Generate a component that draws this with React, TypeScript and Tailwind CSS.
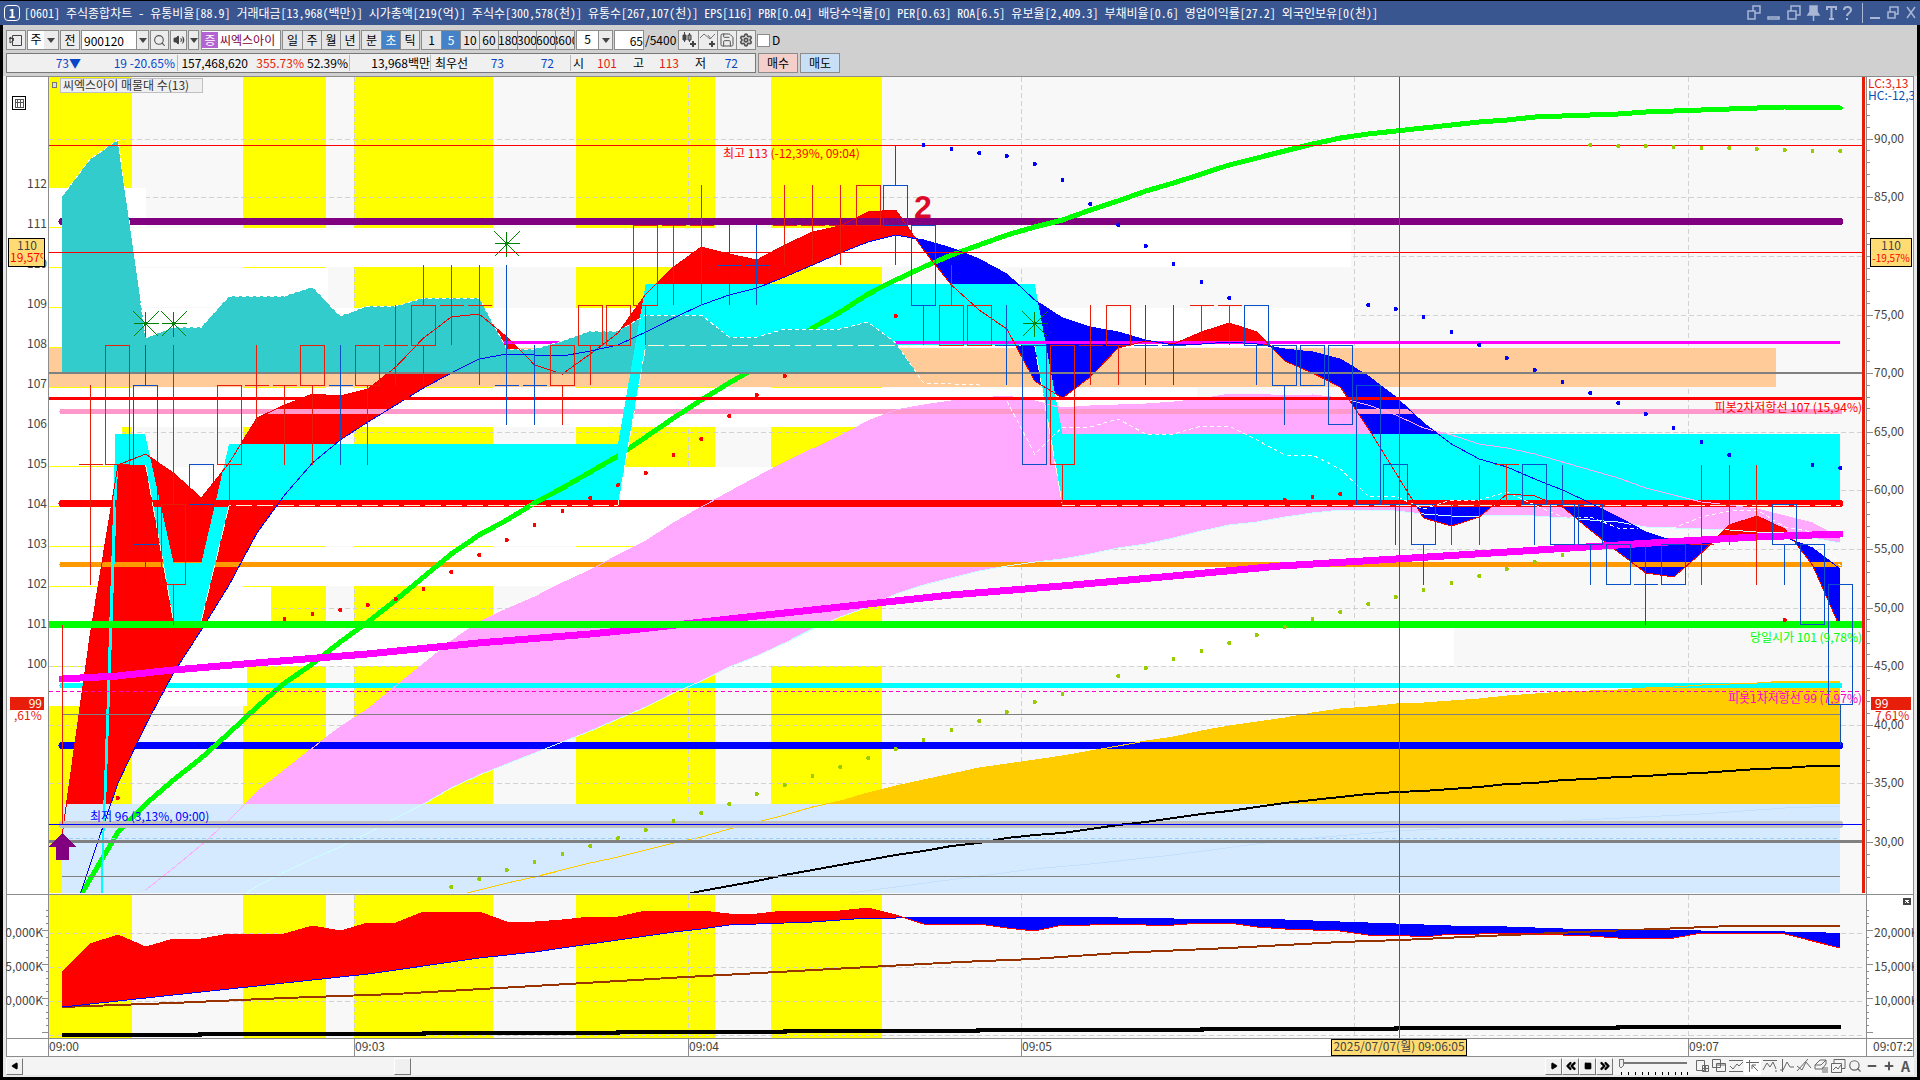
import React from 'react';
import { ChevronsLeft, ChevronsRight, Save, Search, Settings, Volume2, Minus, Plus, Play, Square } from 'lucide-react';

const STEP = 27.78;
const px = (i: number) => 62.4 + STEP * i;
const py = (price: number) => 145.3 + (113 - price) * 39.95;

// [top, bottom, high, low, up?] for each 5 second bar
type Bar = [number, number, number, number, number];

const bars: Bar[] = [
  [101, 96, 101, 96, 2], [105, 105, 107, 102, 1], [108, 105, 108, 105, 1], [107, 103, 108, 102, 0], [104, 102, 108, 101, 1],
  [105, 104, 105, 103, 0], [107, 105, 107, 104, 1], [107, 107, 108, 106, 1], [107, 107, 107, 105, 1], [108, 107, 108, 105, 1],
  [107, 107, 108, 105, 0], [108, 107, 108, 105, 1], [108, 108, 109, 107, 1], [109, 108, 110, 107, 1], [109, 109, 110, 108, 1],
  [109, 109, 110, 107, 1], [107, 107, 110, 106, 0], [107, 107, 108, 106, 0], [108, 107, 108, 106, 1], [109, 108, 109, 107, 1],
  [109, 108, 109, 108, 1], [111, 109, 111, 108, 1], [111, 111, 111, 109, 1], [111, 111, 112, 109, 1], [110, 110, 111, 109, 0],
  [110, 110, 111, 109, 0], [111, 111, 112, 110, 1], [111, 111, 112, 110, 1], [111, 111, 112, 110, 1], [112, 111, 112, 111, 1],
  [112, 111, 113, 110, 0], [111, 109, 111, 108, 0], [109, 108, 110, 108, 1], [109, 108, 109, 108, 1], [108, 108, 109, 107, 0],
  [108, 105, 108, 105, 0], [108, 105, 108, 104, 1], [108, 108, 109, 107, 1], [109, 108, 109, 107, 1], [108, 108, 109, 107, 0],
  [108, 108, 109, 107, 0], [109, 109, 109, 108, 1], [109, 109, 109, 108, 1], [109, 108, 109, 107, 0], [108, 107, 108, 106, 0],
  [108, 107, 108, 107, 0], [108, 106, 108, 106, 0], [107, 104, 107, 104, 0], [105, 104, 105, 103, 0], [104, 103, 104, 102, 0],
  [104, 104, 104, 103, 1], [104, 104, 105, 103, 1], [105, 105, 105, 104, 1], [105, 104, 105, 103, 0], [104, 103, 105, 103, 0],
  [104, 103, 104, 102, 0], [103, 102, 103, 102, 0], [102, 102, 103, 101, 0], [103, 102, 103, 102, 0], [103, 103, 105, 102, 1],
  [104, 104, 105, 103, 1], [104, 104, 105, 102, 1], [104, 103, 104, 102, 0], [103, 101, 103, 101, 0], [102, 99, 102, 98, 0],
];

const fast = [
  833, 635, 465, 454, 473, 498, 463, 418, 405, 394, 396, 389, 367, 338, 317, 314, 337, 365, 374, 354, 333, 294, 267, 247, 254,
  260, 245, 232, 226, 212, 210, 250, 285, 310, 329, 381, 398, 377, 348, 341, 344, 332, 323, 332, 361, 373, 387, 428, 473, 518,
  526, 517, 494, 496, 507, 530, 552, 573, 577, 553, 525, 516, 529, 565, 628,
];
const slow = [
  950, 864, 783, 725, 673, 630, 585, 533, 495, 463, 440, 422, 405, 388, 373, 359, 354, 355, 356, 351, 345, 332, 318, 305, 295,
  288, 277, 265, 253, 242, 235, 240, 248, 259, 274, 300, 318, 327, 332, 340, 345, 344, 342, 344, 349, 352, 359, 376, 397, 423,
  444, 459, 467, 479, 490, 503, 517, 532, 541, 542, 537, 535, 537, 548, 569,
];
const teal = [
  196, 159, 140, 338, 327, 327, 296, 296, 296, 287, 316, 306, 306, 298, 298, 298, 349, 349, 341, 331, 331, 315, 315, 315, 337,
  337, 329, 329, 329, 322, 343, 383, 384, 385, 401, 454, 427, 427, 419, 434, 434, 426, 426, 440, 455, 455, 469, 496, 496, 509,
  500, 500, 492, 505, 517, 517, 528, 528, 528, 517, 511, 510, 527, 532, 566,
];
// starts at bar 3
const pinkTop = [
  890, 868, 845, 820, 792, 770, 748, 727, 709, 686, 664, 641, 622, 609, 597, 583, 570, 555, 541, 523, 507, 492, 477, 462, 449,
  436, 421, 410, 405, 401, 398, 396, 401, 408, 406, 405, 404, 402, 399, 394, 394, 396, 395, 398, 405, 415, 428, 435, 444, 448,
  454, 462, 470, 478, 488, 495, 502, 505, 509, 516, 523, 538,
];
const pinkLow = [
  1000, 975, 945, 905, 886, 872, 859, 847, 833, 818, 804, 788, 775, 764, 753, 742, 731, 719, 707, 693, 681, 667, 656, 643, 629,
  617, 607, 594, 585, 578, 571, 566, 562, 559, 554, 548, 544, 538, 531, 525, 522, 517, 513, 510, 510, 511, 514, 516, 516, 515,
  516, 518, 520, 522, 527, 528, 529, 530, 532, 533, 538, 543,
];
// starts at bar 14
const gold = [
  897, 890, 883, 877, 870, 863, 857, 850, 843, 837, 829, 822, 815, 807, 801, 793, 786, 780, 774, 768, 764, 760, 756, 751, 746,
  741, 737, 731, 726, 722, 718, 713, 709, 707, 704, 703, 701, 699, 696, 694, 692, 691, 690, 688, 687, 685, 684, 683, 681, 681, 682,
];
// starts at bar 22
const black = [
  897, 891, 886, 881, 875, 870, 865, 860, 855, 851, 846, 843, 838, 835, 833, 829, 825, 822, 818, 814, 811, 807, 803, 800, 797,
  794, 792, 791, 789, 787, 784, 783, 780, 779, 777, 776, 774, 773, 771, 769, 768, 766, 766,
];
// starts at bar 2
const green = [
  832, 804, 780, 758, 733, 707, 683, 664, 642, 622, 600, 577, 554, 535, 520, 503, 488, 472, 456, 437, 418, 400, 383, 367, 347,
  328, 312, 294, 280, 267, 255, 245, 235, 227, 220, 210, 201, 191, 183, 174, 165, 158, 151, 144, 138, 134, 131, 128, 125, 122,
  120, 117, 116, 115, 114, 112, 111, 110, 109, 108, 107, 107, 108,
];

const redDots = [
  [2, 798], [8, 619], [9, 614], [10, 610], [11, 605], [12, 599], [13, 589], [14, 572], [15, 555], [16, 540], [17, 525], [18, 511],
  [19, 498], [20, 485], [21, 473], [22, 455], [23, 439], [24, 416], [25, 395], [26, 376], [30, 316], [44, 500], [45, 497],
  [46, 494], [62, 620],
];
const blueDots = [
  [31, 145], [32, 149], [33, 153], [34, 156], [35, 164], [36, 180], [37, 204], [38, 225], [39, 246], [40, 264], [41, 282],
  [42, 298], [47, 305], [48, 309], [49, 317], [50, 332], [51, 345], [52, 358], [53, 370], [54, 382], [55, 393], [56, 403],
  [57, 414], [58, 428], [59, 442], [60, 455], [63, 465], [64, 468],
];
const oliveDots = [
  [14, 887], [15, 879], [16, 870], [17, 862], [18, 854], [19, 846], [20, 838], [21, 830], [22, 821], [23, 813], [24, 804],
  [25, 794], [26, 785], [27, 776], [28, 767], [29, 758], [30, 749], [31, 740], [32, 730], [33, 721], [34, 712], [35, 702],
  [36, 694], [38, 676], [39, 668], [40, 659], [41, 651], [42, 643], [43, 635], [44, 627], [45, 619], [46, 612], [47, 604],
  [48, 597], [49, 590], [50, 583], [51, 576], [52, 569], [53, 562], [54, 555], [55, 145], [56, 146], [57, 146], [58, 147],
  [59, 148], [60, 148], [61, 149], [62, 150], [63, 151], [64, 151],
];

const volFast = [
  972, 944, 935, 947, 939, 939, 934, 934, 934, 926, 931, 923, 923, 912, 912, 912, 922, 922, 920, 917, 917, 911, 911, 911, 914,
  914, 911, 911, 911, 908, 915, 924, 924, 924, 928, 931, 925, 925, 924, 925, 925, 923, 923, 927, 929, 930, 931, 935, 935, 937,
  934, 934, 933, 934, 935, 936, 938, 938, 938, 933, 933, 933, 934, 941, 948,
];
const volSlow = [
  1007, 1004, 1001, 998, 995, 992, 989, 986, 983, 980, 977, 974, 970, 966, 962, 958, 955, 952, 948, 944, 940, 936, 932, 929, 925,
  924, 923, 922, 920, 918, 918, 917, 917, 917, 917, 917, 917, 917, 918, 918, 919, 919, 919, 919, 920, 921, 922, 923, 924, 925,
  926, 926, 927, 928, 929, 929, 930, 930, 930, 931, 931, 931, 932, 932, 934,
];

const stripes = [[49, 83], [243, 83], [354, 139], [576, 139], [771, 111]];
const gridX = [354, 688, 1021, 1354, 1688];

const pts = (ys: number[], from = 0) => ys.map((y, i) => `${px(i + from).toFixed(1)},${y}`).join(' ');
const rev = (ys: number[], from = 0) => pts(ys, from).split(' ').reverse().join(' ');

// Splits the ribbon between two averages where they cross
function ribbon(a: number[], b: number[]) {
  let up = '';
  let down = '';
  for (let i = 0; i < a.length - 1; i++) {
    const d0 = b[i] - a[i];
    const d1 = b[i + 1] - a[i + 1];
    const x0 = px(i);
    const x1 = px(i + 1);
    if (d0 * d1 < 0) {
      const t = d0 / (d0 - d1);
      const xc = x0 + (x1 - x0) * t;
      const yc = a[i] + (a[i + 1] - a[i]) * t;
      const first = `M${x0} ${a[i]}L${xc} ${yc}L${x0} ${b[i]}Z`;
      const second = `M${xc} ${yc}L${x1} ${a[i + 1]}L${x1} ${b[i + 1]}Z`;
      if (d0 > 0) { up += first; down += second; } else { down += first; up += second; }
    } else {
      const quad = `M${x0} ${a[i]}L${x1} ${a[i + 1]}L${x1} ${b[i + 1]}L${x0} ${b[i]}Z`;
      if (d0 + d1 > 0) up += quad; else down += quad;
    }
  }
  return { up, down };
}

const price = ribbon(fast, slow);
const volume = ribbon(volFast, volSlow);

function Level({ y, color, w = 1, full = false, dash }: { y: number; color: string; w?: number; full?: boolean; dash?: string }) {
  return (
    <line x1={full ? 49 : 62} x2={full ? 1863 : 1840} y1={y} y2={y} stroke={color} strokeWidth={w}
      strokeLinecap={w > 3 && !full ? 'round' : 'butt'} strokeDasharray={dash} />
  );
}

function Dots({ data, color }: { data: number[][]; color: string }) {
  return <g fill={color}>{data.map(([i, y]) => <circle key={`${i}-${y}`} cx={px(i)} cy={y} r="2" />)}</g>;
}

function Candles() {
  return (
    <g fill="none">
      {bars.map(([top, bottom, high, low, up], i) => {
        const x = Math.floor(px(i)) + 0.5;
        const t = Math.floor(py(top)) + 0.5;
        const b = Math.floor(py(bottom)) + 0.5;
        const h = py(high);
        const l = py(low);
        const color = up ? '#e61e0a' : '#0a50c8';
        if (up === 2) return <path key={i} d={`M${x} ${h}V${l}`} stroke={color} />;
        return (
          <path key={i} stroke={color}
            d={`M${x} ${h}V${t}M${x} ${b}V${l}M${x - 12} ${t}H${x + 12}${t === b ? '' : `V${b}H${x - 12}Z`}`} />
        );
      })}
    </g>
  );
}

function Star({ x, y }: { x: number; y: number }) {
  return (
    <g stroke="#008000" strokeWidth="1">
      <path d={`M${x - 12} ${y}h25M${x} ${y - 12}v25M${x - 12} ${y - 12}l25 25M${x + 13} ${y - 12}l-25 25`} />
      <circle cx={x} cy={y} r="2" fill="#008000" stroke="none" />
    </g>
  );
}

// right edges of the volume-at-price rows, highest price first
const profile = [146, 1351, 328, 1354, 1776, 1197, 122, 1000, 900, 860, 271, 1454, 247];

function PriceChart() {
  return (
    <svg viewBox="6 76 1908 819" className="block w-full h-auto" shapeRendering="crispEdges" fontSize="12" role="img" aria-label="씨엑스아이 매물대">
      <defs>
        <clipPath id="plot"><rect x="49" y="77" width="1816" height="816" /></clipPath>
        <clipPath id="tag"><rect x="9" y="239" width="34" height="27" /></clipPath>
      </defs>
      <rect x="6" y="76" width="1908" height="819" fill="#fff" />
      <rect x="49" y="77" width="1817" height="817" fill="#f8f8f8" />
      <g clipPath="url(#plot)">
        {stripes.map(([x, w]) => <rect key={x} x={x} y="77" width={w} height="816" fill="#ff0" />)}
        <g stroke="#d2d2d2" strokeDasharray="5 3">
          {gridX.map((x) => <line key={x} x1={x + 0.5} x2={x + 0.5} y1="77" y2="893" />)}
          {Array.from({ length: 13 }, (_, i) => Math.round(138.7 + i * 58.6) + 0.5).map((y) => <line key={y} x1="49" x2="1863" y1={y} y2={y} />)}
        </g>
        {profile.map((right, i) => (
          <rect key={i} x="49" y={Math.round(188 + i * 39.9)} width={right - 49} height="39" fill={i === 4 ? '#ffcc99' : '#fff'} />
        ))}

        <polygon points={`${pts(pinkTop, 3)} ${rev(pinkLow, 3)}`} fill="#ffaaff" />
        <polygon points={`${pts(gold, 14)} 1840,893 451,893`} fill="#fc0" />
        <Level y={685.5} color="#0ff" w={5} />
        <Level y={745.5} color="#00f" w={7} />
        <path d={price.up} fill="#f00" />
        <path d={price.down} fill="#00f" />
        <Level y={221.5} color="#800080" w={7} />
        <Level y={411.5} color="#ff99cc" w={5} />
        <Level y={564.5} color="#ff9900" w={5} />
        <path fill="#0ff" d={`M101 893L116 434H145L${px(4)} 563H${px(5)}L${px(6)} 444H${px(20)}L${px(21)} 284H${px(35)}L${px(36)} 434H1840V505H${px(36)}L${px(35)} 345H${px(21)}L${px(20)} 505H${px(6)}L${px(5)} 621H${px(4)}L${px(3)} 465H118L103 893Z`} />
        <Level y={342.5} color="#f0f" w={3} />
        <Level y={503.5} color="#f00" w={7} />
        <polyline points={`82,893 ${pts(green, 2)}`} fill="none" stroke="#0f0" strokeWidth="5" strokeLinejoin="round" strokeLinecap="round" />
        <polygon points={`${pts(teal.slice(0, 31))} 917,373 62.4,373`} fill="#33cccc" />
        <polygon points={`${px(20)},444 ${px(21)},284 ${px(21)},345 ${px(20)},505`} fill="#0ff" />
        <path fill="none" stroke="#fff8dc" strokeDasharray="16 5" d={`M${px(4)} 621L${px(3)} 465M${px(5)} 621L${px(6)} 505.5H${px(20)}L${px(21)} 345.5H${px(35)}L${px(36)} 505.5H1840`} />
        <polyline points={pts(teal)} fill="none" stroke="#fff" strokeDasharray="4 3" />

        <rect x="62" y="804" width="1778" height="89" fill="#d6eaff" />
        <polyline points={`82,893 ${pts(green.slice(0, 3), 2)}`} fill="none" stroke="#0f0" strokeWidth="5" />
        <polyline points="850,893 979,876 1034,869 1090,864 1173,855 1256,844 1313,838 1396,831 1460,828 1562,821 1701,814 1785,808 1840,806" fill="none" stroke="#c4e0fc" />
        <polyline points={pts(pinkLow, 3)} fill="none" stroke="#ccffff" />
        <polyline points={pts(pinkTop, 3)} fill="none" stroke="#ffaaff" />
        <polyline points={pts(gold, 14)} fill="none" stroke="#fc0" />
        <polyline points="101.5,893 116.5,434" fill="none" stroke="#0ff" strokeWidth="2" />
        <polyline points={pts(fast)} fill="none" stroke="#e00" />
        <polyline points={pts(slow)} fill="none" stroke="#00f" />
        <Level y={824.5} color="#c0c0c0" w={7} />
        <Level y={838.5} color="#99ccff" dash="4 3" />
        <polyline points={pts(black, 22)} fill="none" stroke="#000" strokeWidth="2" />
        <polyline fill="none" stroke="#f0f" strokeWidth="7" strokeLinecap="round" points="62,679 117,676 173,670 256,663 367,654 478,643 590,634 640,629 729,619 840,607 951,595 1062,586 1173,576 1280,566 1396,559 1507,552 1618,545 1701,540 1757,537 1812,535 1840,534" />
        <Level y={841.5} color="#808080" w={3} full />
        <Level y={824.5} color="#00f" full />
        <Level y={714.5} color="#808080" />
        <Level y={876.5} color="#808080" />
        <Level y={373} color="#808080" w={2} full />
        <Level y={398.5} color="#f00" w={3} full />
        <Level y={624.5} color="#0f0" w={7} full />
        <Level y={691.5} color="#f0c" full dash="4 3" />
        <Level y={145.5} color="#f00" full />
        <Dots data={redDots} color="#f00" />
        <Dots data={blueDots} color="#00f" />
        <Dots data={oliveDots} color="#99cc00" />
        <Candles />
        <Star x={145.5} y={323.5} />
        <Star x={173.5} y={323.5} />
        <Star x={506.5} y={243.5} />
        <Star x={1034.5} y={323.5} />
        <path d="M62.5 833l13.5 14h-7v13h-13v-13h-7z" fill="#800080" />
        <Level y={252.5} color="#f00" full />
        <line x1="1399.5" x2="1399.5" y1="77" y2="893" stroke="#e61e0a" />
        <rect x="1862" y="77" width="3" height="816" fill="#e61e0a" />
        <text x="723" y="158" fill="#f00">최고 113 (-12,39%, 09:04)</text>
        <text x="914" y="218" fill="#dc0a28" fontSize="32" fontWeight="700" fontFamily="Liberation Sans, sans-serif">2</text>
        <text x="1862" y="412" fill="#f00" textAnchor="end">피봇2차저항선 107 (15,94%)</text>
        <text x="1862" y="642" fill="#0f0" textAnchor="end">당일시가 101 (9,78%)</text>
        <text x="1862" y="703" fill="#f0c" textAnchor="end">피봇1차저항선 99 (7,97%)</text>
        <text x="90" y="821" fill="#00f">최저 96 (3,13%, 09:00)</text>
      </g>

      <rect x="52.5" y="82.5" width="4" height="5" fill="#ddd" stroke="#777" />
      <rect x="60.5" y="78.5" width="142" height="14" fill="#f0f0f0" stroke="#c0c0c0" />
      <text x="63" y="90" fill="#333">씨엑스아이 매물대 수(13)</text>

      <g stroke="#8c8c8c" fill="none">
        <path d="M6 76.5H1914M6.5 76V895M48.5 77V895M1866.5 77V895M1913.5 77V895M6 894.5H1914" />
        {Array.from({ length: 67 }, (_, i) => {
          const y = Math.round(103.6 + i * 11.72) + 0.5;
          return <line key={i} x1="1867" x2={i % 5 === 3 ? 1873 : 1870} y1={y} y2={y} />;
        })}
      </g>
      <rect x="12.5" y="96.5" width="13" height="13" fill="#fff" stroke="#000" strokeWidth="1" />
      <path d="M15 99.5h8v8h-8zM15 102.5h8M17.5 99v8M20.5 99v8" fill="none" stroke="#555" />
      <g fill="#444">
        {[112, 111, 110, 109, 108, 107, 106, 105, 104, 103, 102, 101, 100].map((p) => (
          <text key={p} x="47" y={Math.round(py(p)) + 3} textAnchor="end">{p}</text>
        ))}
        {[90, 85, 75, 70, 65, 60, 55, 50, 45, 40, 35, 30].map((v) => (
          <text key={v} x="1874" y={Math.round(138.7 + (90 - v) * 11.72) + 4}>{v},00</text>
        ))}
      </g>
      <rect x="8.5" y="238.5" width="36" height="28" fill="#ffdc73" stroke="#000" />
      <rect x="1870.5" y="238.5" width="41" height="28" fill="#ffdc73" stroke="#000" />
      <rect x="10" y="697" width="34" height="13" fill="#e61e0a" />
      <rect x="1871" y="697" width="40" height="13" fill="#e61e0a" />
      <text x="27" y="250" fill="#444" textAnchor="middle">110</text>
      <text x="10" y="262" fill="#f00" clipPath="url(#tag)">19,57%</text>
      <text x="1891" y="250" fill="#444" textAnchor="middle">110</text>
      <text x="1891" y="262" fill="#f00" textAnchor="middle" fontSize="10">-19,57%</text>
      <text x="42" y="708" fill="#fff" textAnchor="end">99</text>
      <text x="14" y="720" fill="#e61e0a">,61%</text>
      <text x="1875" y="708" fill="#fff">99</text>
      <text x="1875" y="720" fill="#e61e0a">7,61%</text>
      <text x="1868" y="88" fill="#e61e0a">LC:3,13</text>
      <text x="1868" y="100" fill="#0a50b4">HC:-12,3</text>
    </svg>
  );
}

function VolumeChart() {
  return (
    <svg viewBox="6 895 1908 144" className="block w-full h-auto" shapeRendering="crispEdges" fontSize="12" role="img" aria-label="거래량">
      <rect x="6" y="895" width="1908" height="144" fill="#fff" />
      <rect x="49" y="895" width="1817" height="143" fill="#f8f8f8" />
      {stripes.map(([x, w]) => <rect key={x} x={x} y="895" width={w} height="143" fill="#ff0" />)}
      <g stroke="#d2d2d2" strokeDasharray="5 3">
        {gridX.map((x) => <line key={x} x1={x + 0.5} x2={x + 0.5} y1="895" y2="1038" />)}
        {[933, 967, 1001, 1035].map((y) => <line key={y} x1="49" x2="1865" y1={y + 0.5} y2={y + 0.5} />)}
      </g>
      <path d={volume.up} fill="#f00" />
      <path d={volume.down} fill="#00f" />
      <polyline points="62,1007 173,1003 285,998 395,994 534,986 686,977 796,971 960,962 1033,959 1118,953 1229,948 1340,942 1401,940 1486,936 1603,931 1658,929 1731,926 1840,926" fill="none" stroke="#993300" strokeWidth="2" />
      <polyline points={pts(volSlow)} fill="none" stroke="#00f" />
      <polyline points={pts(volFast)} fill="none" stroke="#f00" />
      <path d="M62 1035H200V1034H424V1033H618V1032H785V1031H978V1030H1202V1029H1396V1028H1618V1027H1841" fill="none" stroke="#000" strokeWidth="4" />
      <line x1="1399.5" x2="1399.5" y1="895" y2="1038" stroke="#e61e0a" />
      <g stroke="#8c8c8c" fill="none">
        <path d="M6.5 895V1039M48.5 895V1039M1866.5 895V1039M1913.5 895V1039M6 1038.5H1914" />
        {Array.from({ length: 19 }, (_, i) => {
          const y = Math.round(909.5 + i * 6.8) + 0.5;
          const big = [933, 967, 1001, 1035].some((m) => Math.abs(m - y) < 3);
          return <path key={i} d={`M48 ${y}H${big ? 42 : 46}M1867 ${y}H${big ? 1873 : 1869}`} />;
        })}
      </g>
      <g fill="#444">
        {['20,000K', '15,000K', '10,000K'].map((t, i) => (
          <React.Fragment key={t}>
            <text x="43" y={937 + i * 34} textAnchor="end">{t.slice(1)}</text>
            <text x="1874" y={937 + i * 34}>{t}</text>
          </React.Fragment>
        ))}
      </g>
      <rect x="1903" y="898" width="8" height="7" fill="#444" />
      <path d="M1905 900l4 3M1909 900l-4 3" stroke="#fff" />
    </svg>
  );
}

function TimeAxis() {
  const marks: [number, string][] = [[48, '09:00'], [354, '09:03'], [688, '09:04'], [1021, '09:05'], [1688, '09:07'], [1866, '']];
  return (
    <svg viewBox="6 1039 1908 18" className="block w-full h-auto" shapeRendering="crispEdges" fontSize="12" role="img" aria-label="시간">
      <rect x="6" y="1039" width="1908" height="18" fill="#fff" />
      <g fill="#444">
        {marks.map(([x, label]) => (
          <React.Fragment key={x}>
            <line x1={x + 0.5} x2={x + 0.5} y1="1039" y2="1056" stroke="#8c8c8c" />
            <text x={x + 1} y="1051">{label}</text>
          </React.Fragment>
        ))}
        <text x="1873" y="1051">09:07:2</text>
      </g>
      <rect x="1331.5" y="1039.5" width="135" height="16" fill="#ffdc73" stroke="#000" />
      <text x="1399" y="1051" fill="#444" textAnchor="middle">2025/07/07(월) 09:06:05</text>
      <path d="M6.5 1039V1057M1913.5 1039V1057M6 1056.5H1914" stroke="#8c8c8c" fill="none" />
    </svg>
  );
}

function TitleBar() {
  return (
    <header className="flex h-6 items-center justify-between bg-[#3a5690] pl-1 pr-1 text-white">
      <div className="flex items-center gap-1">
        <span className="flex h-4 w-4 items-center justify-center rounded-sm border border-white font-bold">1</span>
        <h1 className="whitespace-pre font-['Noto_Sans_Mono_CJK_KR','Noto_Sans_CJK_KR',sans-serif]">[0601] 주식종합차트 - 유통비율[88.9] 거래대금[13,968(백만)] 시가총액[219(억)] 주식수[300,578(천)] 유통수[267,107(천)] EPS[116] PBR[0.04] 배당수익률[0] PER[0.63] ROA[6.5] 유보율[2,409.3] 부채비율[0.6] 영업이익률[27.2] 외국인보유[0(천)]</h1>
      </div>
      <svg viewBox="0 0 170 20" className="h-5 w-[170px]" fill="none" stroke="#a9b6d6" strokeWidth="1.5">
        <path d="M2 8h7v8H2zM7 8V3h7v7H9M22 14h11v2H22zM42 8h8v8h-8zM45 8V3h9v9h-4" />
        <path d="M64 3h7v6l2 3H62l2-3zM67.500 12v6" fill="#a9b6d6" />
        <path d="M81 7V4h9v3M85.500 4v12M83 16h5M98 7c0-4 7-4 7 0 0 3-4 3-4 6M101 15v2" strokeWidth="2" />
        <path d="M116.500 0v20" strokeWidth="1" />
        <path d="M124 15h10" strokeWidth="2" />
        <path d="M142 9h7v6h-7zM144 9V4h8v7h-3M161 4l8 11M169 4l-8 11" />
      </svg>
    </header>
  );
}

const box = 'flex h-5 items-center justify-center border border-[#8c8c8c] bg-[#ececec]';

function Seg({ items, active }: { items: string[]; active?: string }) {
  return (
    <div className="flex h-5 border border-[#8c8c8c]">
      {items.map((t, i) => (
        <button key={t} className={`w-[19px] overflow-hidden ${i ? 'border-l border-[#8c8c8c]' : ''} ${t === active ? 'bg-[#4682c8] text-white' : 'bg-[#e6e6e6]'}`}>
          <span className="flex justify-center">{t}</span>
        </button>
      ))}
    </div>
  );
}

function Arrow() {
  return <svg viewBox="0 0 8 5" className="h-[5px] w-2"><path d="M0 0h8L4 5z" fill="#444" /></svg>;
}

function Toolbar() {
  return (
    <div className="flex h-5 items-center gap-px">
      <button className={`${box} w-5`} aria-label="패널">
        <svg viewBox="0 0 14 14" className="h-3.5 w-3.5" fill="none" stroke="#444"><path d="M3.500 2.500h9v10h-9zM0 5.500h5M1 4v6l4-3z" /></svg>
      </button>
      <button className={`${box} w-8`}><span className="h-full w-4 bg-white">주</span><span className="flex h-full w-3.5 items-center justify-center"><Arrow /></span></button>
      <button className={`${box} w-5`}>전</button>
      <div className={`${box} w-[68px]`}>
        <input aria-label="종목코드" defaultValue="900120" className="h-full w-[54px] bg-white pl-0.5" />
        <button className="flex h-full flex-1 items-center justify-center border-l border-[#8c8c8c]" aria-label="종목 목록"><Arrow /></button>
      </div>
      <button className={`${box} w-[19px]`} aria-label="검색"><Search size={13} color="#555" /></button>
      <button className={`${box} w-[17px]`} aria-label="소리"><Volume2 size={12} fill="#444" color="#444" /></button>
      <button className={`${box} mr-px w-[11px]`} aria-label="소리 설정"><Arrow /></button>
      <div className="flex h-5 w-20 items-center border border-[#8c8c8c] bg-white">
        <span className="flex h-4 w-4 items-center justify-center bg-[#b464d2] text-white">증</span>
        <span className="pl-0.5 text-[#820032]">씨엑스아이</span>
      </div>
      <Seg items={['일', '주', '월', '년']} />
      <Seg items={['분', '초', '틱']} active="초" />
      <Seg items={['1', '5', '10', '60', '180', '300', '600', '3600']} active="5" />
      <button className={`${box} w-[37px]`}><span className="h-full flex-1 bg-white">5</span><span className="flex h-full w-3.5 items-center justify-center border-l border-[#8c8c8c]"><Arrow /></span></button>
      <input aria-label="표시 개수" defaultValue="65" className="h-5 w-[30px] border border-[#8c8c8c] bg-white text-right" />
      <span className="w-8">/5400</span>
      <div className="flex h-5 border border-[#8c8c8c] bg-[#ececec]">
        <button className="flex w-[19px] items-center justify-center" aria-label="봉 추가">
          <svg viewBox="0 0 16 16" className="h-4 w-4" stroke="#444"><path d="M3.500 0v10M8.500 1v9" /><path d="M2 3h3v5H2z" fill="#444" /><path d="M7 3h3v5H7z" fill="#999" /><path d="M9 12h6M12 9v6" strokeWidth="2" /></svg>
        </button>
        <button className="flex w-[19px] items-center justify-center border-l border-[#8c8c8c]" aria-label="지표 추가">
          <svg viewBox="0 0 16 16" className="h-4 w-4" fill="none" stroke="#777"><path d="M0 6l4-4 6 5 5-5M8 3l3 4" /><path d="M9 12h6M12 9v6" stroke="#444" strokeWidth="2" /></svg>
        </button>
        <button className="flex w-[19px] items-center justify-center border-l border-[#8c8c8c]" aria-label="저장"><Save size={16} color="#555" strokeWidth={1.5} /></button>
        <button className="flex w-[19px] items-center justify-center border-l border-[#8c8c8c]" aria-label="설정"><Settings size={14} color="#555" strokeWidth={3} /></button>
      </div>
      <label className="flex items-center gap-0.5">
        <input type="checkbox" className="h-[13px] w-[13px] appearance-none border border-[#8c8c8c] bg-white" />
        D
      </label>
    </div>
  );
}

function Quote() {
  const blue = 'text-[#0a46c8]';
  const red = 'text-[#e61e0a]';
  return (
    <div className="flex h-5 items-center gap-0.5">
      <div className="flex h-5 w-[750px] items-center border border-[#787878] bg-[#f0f0f0]">
        <span className={`w-[74px] text-right ${blue}`}>73▼</span>
        <span className={`w-[46px] text-right ${blue}`}>19</span>
        <span className={`w-[51px] border-r border-[#bbb] pr-0.5 text-right ${blue}`}>-20.65%</span>
        <span className="w-[70px] text-right">157,468,620</span>
        <span className={`w-[56px] text-right ${red}`}>355.73%</span>
        <span className="w-[46px] border-r border-[#bbb] pr-px text-right">52.39%</span>
        <span className="w-[81px] border-r border-[#bbb] text-right">13,968백만</span>
        <span className="w-10 pl-1">최우선</span>
        <span className={`w-[33px] text-right ${blue}`}>73</span>
        <span className={`w-[50px] text-right ${blue}`}>72</span>
        <span className="ml-4 w-4 border-l border-[#bbb] pl-0.5">시</span>
        <span className={`w-[31px] text-right ${red}`}>101</span>
        <span className="w-[27px] text-right">고</span>
        <span className={`w-[35px] text-right ${red}`}>113</span>
        <span className="w-[27px] text-right">저</span>
        <span className={`w-[32px] text-right ${blue}`}>72</span>
      </div>
      <button className="h-5 w-10 border border-[#8c8c8c] bg-[#f5d0cb]">매수</button>
      <button className="h-5 w-10 border border-[#8c8c8c] bg-[#c8e0f5]">매도</button>
    </div>
  );
}

const bevel = 'flex h-[17px] w-[17px] items-center justify-center border border-t-white border-l-white border-b-[#777] border-r-[#777] bg-[#f0f0f0]';
const tool = 'flex h-[17px] w-[17px] items-center justify-center';

const drawIcons = [
  'M2.500 2.500h8v10h-8zM8.500 7.500h6v6h-6zM11.500 7v7M8 10.500h7',
  'M1.500 1.500h8v8h-8zM5.500 5.500h9v8h-9zM5 7h10',
  'M1 2.500h14M1 13.500h14M2 8l3 3 4-5 2 2 4-4',
  'M1 4.500h13M4.500 2v12M7 7l6 6M7 7v4M7 7h4',
  'M1 2.500h14M1 12l4-7 3 4 3-5 3 7M14 12v2',
  'M3.500 1v13M1 12h3l4-8 3 5 4 0',
  'M1 13L12 1M1 8l5 4 4-8 5 6',
  'M2 7l5-5h6v4l-4 5H2zM2 7h6M8 7l5-5M10 9v6M12 9v6M14 9v6',
  'M1.500 5.500h10v9h-10zM4 5V1.500h11v9h-3M3 12l3-3 2 2 3-4',
];

function BottomBar() {
  return (
    <footer className="mx-[3px] flex h-[18px] items-center bg-[#f4f4f4]">
      <button className={bevel} aria-label="왼쪽"><Play size={8} fill="#000" className="rotate-180" /></button>
      <div className="flex h-full flex-1 items-center">
        <span className="w-[24.4%]" />
        <button className={bevel} aria-label="스크롤 손잡이" />
      </div>
      <button className={bevel} aria-label="재생"><Play size={8} fill="#000" /></button>
      <button className={bevel} aria-label="뒤로"><ChevronsLeft size={14} strokeWidth={4} /></button>
      <button className={bevel} aria-label="정지"><Square size={8} fill="#000" /></button>
      <button className={bevel} aria-label="앞으로"><ChevronsRight size={14} strokeWidth={4} /></button>
      <svg viewBox="0 0 80 17" className="h-[17px] w-20" shapeRendering="crispEdges">
        <path d="M8 4.500h66" stroke="#777" strokeWidth="2" />
        <path d="M6 1h4v7l-2 2-2-2z" fill="#eee" stroke="#777" />
        <path d="M8.500 14v3M15.500 14v3M22.500 14v3M29 14v3M35.500 14v3M42.500 14v3M49 14v3M55.500 14v3M62.500 14v3M68.500 14v3M74.500 14v3" stroke="#000" />
      </svg>
      {drawIcons.map((d, i) => (
        <button key={d} className={`${tool} ${i === 3 ? 'bg-white' : ''}`} aria-label={`그리기 도구 ${i + 1}`}>
          <svg viewBox="0 0 16 16" className="h-4 w-4" fill="none" stroke="#666"><path d={d} /></svg>
        </button>
      ))}
      <button className={tool} aria-label="확대경"><Search size={14} color="#666" /></button>
      <button className={tool} aria-label="축소"><Minus size={12} color="#555" strokeWidth={4} /></button>
      <button className={tool} aria-label="확대"><Plus size={12} color="#555" strokeWidth={4} /></button>
      <button className={`${tool} text-sm font-bold text-[#555]`}>A</button>
    </footer>
  );
}

export default function App() {
  return (
    <main className="min-h-screen bg-black pt-px font-['Noto_Sans_CJK_KR',sans-serif] text-xs leading-4 text-black">
      <TitleBar />
      <div className="mx-[3px] bg-[#e8e8e8] pb-0.5">
        <div className="flex h-[51px] flex-col gap-[3px] bg-[#d0d0d0] px-[3px] pt-[5px]">
          <Toolbar />
          <Quote />
        </div>
        <div className="px-[3px]">
          <PriceChart />
          <VolumeChart />
          <TimeAxis />
        </div>
        <BottomBar />
      </div>
    </main>
  );
}
